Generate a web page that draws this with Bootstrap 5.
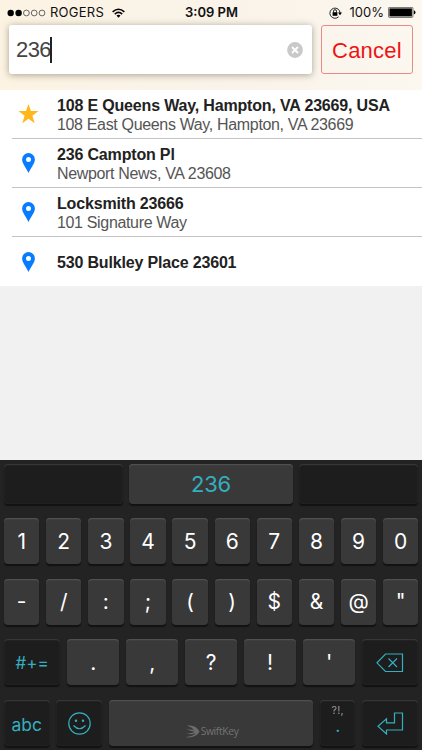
<!DOCTYPE html>
<html lang="en">
<head>
<meta charset="utf-8">
<meta name="viewport" content="width=device-width, initial-scale=1">
<title>Address search</title>
<link href="https://cdn.jsdelivr.net/npm/bootstrap@5.3.0/dist/css/bootstrap.min.css" rel="stylesheet">
<style>
body{font-family:"Liberation Sans",Arial,sans-serif;background:#f1f1f1;color:#222;height:750px;overflow:hidden}
svg{display:block;flex:none}
.top-area{height:89.5px;background:linear-gradient(90deg,#fcf3e3,#f9f3e9 50%,#fcf7ef)}
.status{height:25px;font-family:Inter,sans-serif;font-size:13px;color:#111;display:grid;grid-template-columns:1fr auto 1fr;padding:0 6px 0 7px}
.carrier{letter-spacing:.25px}
.search-row{padding:0 9px}
.search-box{width:303px;height:49px;background:#fff;border-radius:3px;box-shadow:0 1px 7px rgba(90,75,50,.5);padding:0 9px 0 7px}
.query{font-size:22px;letter-spacing:-.6px;color:#444}
.caret{width:2px;height:26px;background:#222;margin-left:-1px}
.cancel-btn{width:92px;height:49px;border:1px solid #e88a85;border-radius:3px;color:#ee1414;font-size:22px;padding:2px 0 0;background:transparent;line-height:1;letter-spacing:.25px}
.place{height:49.2px;padding-left:12px;background:#fff}
.place-icon{width:33px;display:flex;justify-content:center}
.place:not(:last-child) .place-in{border-bottom:1px solid #c4c4c6}
.place-in{height:100%}
.place-name{font-weight:700;font-size:16px;line-height:19px;letter-spacing:-.17px;white-space:nowrap}
.place-sub{font-size:16px;line-height:19px;letter-spacing:-.34px;color:#555;white-space:nowrap}
.place-text{margin-left:12px;padding-top:2px}
.keyboard{height:290px;background:#232323;padding:4px 3.7px 0 4px;font-family:Inter,sans-serif;color:#fff}
.krow{display:grid;height:46px;column-gap:6.8px;margin-bottom:14.6px}
.ksug{height:40px;grid-template-columns:119px 164px 119px;column-gap:6px;margin-bottom:14.2px}
.k10{grid-template-columns:repeat(10,1fr)}
.k7{grid-template-columns:56.3px repeat(5,1fr) 56.3px}
.k5{grid-template-columns:45.6px 45.6px 1fr 35px 56.3px}
.key{border:0;border-radius:4px;background:#393939;color:#fff;font-size:21px;line-height:1;padding:0;display:flex;align-items:center;justify-content:center;box-shadow:inset 0 1.3px 0 #505050,0 1.5px 1px #121212;min-width:0}
.key.dim{background:#1d1d1d;color:#35afc0;box-shadow:inset 0 1.3px 0 #363636,inset 0 0 2px #303030,0 1.5px 1px #121212}
.key.teal{color:#35afc0}
.key.t-sug{font-size:22px;letter-spacing:-.2px}
.key.t-fn{font-size:17.5px;padding-top:3px}
.key.t-sym{font-size:17px;padding-top:3px}
.key.pic{padding-top:2px}
.key.brand{font-family:"Open Sans",sans-serif;font-size:10.3px;letter-spacing:-.35px;color:#747474;padding:17px 0 0 1px;gap:1px}
.hint{font-size:10.5px;letter-spacing:.3px;color:#999;line-height:10px;padding-top:6px}
.dot{font-size:18px;line-height:18px;margin-top:1px}
</style>
<script src="https://cdn.jsdelivr.net/npm/bootstrap@5.3.0/dist/js/bootstrap.bundle.min.js"></script>
</head>
<body class="m-0 d-flex flex-column">
<header class="top-area">
  <div class="status align-items-center">
    <div class="d-flex align-items-center">
      <svg width="39" height="8" viewBox="0 0 39 8"><g fill="#000"><circle cx="3.7" cy="4" r="3.2"/><circle cx="11.6" cy="4" r="3.2"/></g><g fill="none" stroke="#444" stroke-width=".8"><circle cx="19.4" cy="4" r="2.9"/><circle cx="27.2" cy="4" r="2.9"/><circle cx="35" cy="4" r="2.9"/></g></svg>
      <span class="carrier ms-1">ROGERS</span>
      <svg class="ms-2" width="13" height="10" viewBox="0 0 14 10"><g fill="none" stroke="#000" stroke-width="1.7"><path d="M.7 3.8Q7-1.9 13.3 3.8M3 6.2Q7 2.6 11 6.2"/></g><path d="M4.8 7.8Q7 6 9.2 7.8L7 10Z"/></svg>
    </div>
    <div class="fw-semibold">3:09 PM</div>
    <div class="d-flex align-items-center justify-content-end">
      <svg class="me-2" width="13" height="12" viewBox="0 0 13 12"><path d="M9.6 9.8A5.1 5.1 0 1 1 11.1 6" fill="none" stroke="#222"/><path d="M9 5.5h4L11 8.3Z"/><rect x="3.6" y="5.2" width="4.8" height="3.6"/><path d="M4.5 5.4V4.2a1.5 1.5 0 0 1 3 0v1.2" fill="none" stroke="#000" stroke-width=".9"/></svg>
      <span>100%</span>
      <svg class="ms-1" width="28" height="11" viewBox="0 0 28 11"><rect x=".4" y=".4" width="24.5" height="10" rx="1" fill="none" stroke="#333" stroke-width=".7"/><rect x="1.4" y="1.4" width="22.5" height="8"/><path d="M25.8 3.3Q27.5 3.800 27.5 5.400T25.800 7.500Z"/></svg>
    </div>
  </div>
  <div class="search-row d-flex justify-content-between">
    <div class="search-box d-flex align-items-center">
      <span class="query">236</span><span class="caret"></span>
      <svg class="ms-auto" width="16" height="16" viewBox="0 0 16 16"><circle cx="8" cy="8" r="7.9" fill="#c9c9c9"/><path d="M5 5l6 6M11 5l-6 6" stroke="#fff" stroke-width="1.8"/></svg>
    </div>
    <button class="cancel-btn btn">Cancel</button>
  </div>
</header>
<main>
  <div class="place"><div class="place-in d-flex align-items-center">
    <div class="place-icon"><svg width="21" height="20" viewBox="0 0 21 20"><path fill="#ffb71c" d="M10.5 0l2.45 7.1h7.55l-6.1 4.6 2.3 7.5-6.2-4.5-6.2 4.5 2.3-7.5L.5 7.1h7.55Z"/></svg></div>
    <div class="place-text"><div class="place-name">108 E Queens Way, Hampton, VA 23669, USA</div><div class="place-sub">108 East Queens Way, Hampton, VA 23669</div></div>
  </div></div>
  <div class="place"><div class="place-in d-flex align-items-center">
    <div class="place-icon"><svg width="13" height="20" viewBox="0 0 13 20"><path fill="#087cff" fill-rule="evenodd" d="M6.5 0A6.4 6.4 0 0 0 .1 6.5C.1 10.5 4.4 15.5 6.5 20 8.6 15.5 12.9 10.5 12.9 6.5A6.4 6.4 0 0 0 6.5 0ZM6.5 3.9a2.5 2.5 0 1 1 0 5 2.5 2.5 0 0 1 0-5Z"/></svg></div>
    <div class="place-text"><div class="place-name">236 Campton Pl</div><div class="place-sub">Newport News, VA 23608</div></div>
  </div></div>
  <div class="place"><div class="place-in d-flex align-items-center">
    <div class="place-icon"><svg width="13" height="20" viewBox="0 0 13 20"><path fill="#087cff" fill-rule="evenodd" d="M6.5 0A6.4 6.4 0 0 0 .1 6.5C.1 10.5 4.4 15.5 6.5 20 8.6 15.5 12.9 10.5 12.9 6.5A6.4 6.4 0 0 0 6.5 0ZM6.5 3.9a2.5 2.5 0 1 1 0 5 2.5 2.5 0 0 1 0-5Z"/></svg></div>
    <div class="place-text"><div class="place-name">Locksmith 23666</div><div class="place-sub">101 Signature Way</div></div>
  </div></div>
  <div class="place"><div class="place-in d-flex align-items-center">
    <div class="place-icon"><svg width="13" height="20" viewBox="0 0 13 20"><path fill="#087cff" fill-rule="evenodd" d="M6.5 0A6.4 6.4 0 0 0 .1 6.5C.1 10.5 4.4 15.5 6.5 20 8.6 15.5 12.9 10.5 12.9 6.5A6.4 6.4 0 0 0 6.5 0ZM6.5 3.9a2.5 2.5 0 1 1 0 5 2.5 2.5 0 0 1 0-5Z"/></svg></div>
    <div class="place-text"><div class="place-name">530 Bulkley Place 23601</div></div>
  </div></div>
</main>
<section class="keyboard mt-auto">
  <div class="krow ksug"><button class="key dim" aria-label="Left suggestion"></button><button class="key teal t-sug">236</button><button class="key dim" aria-label="Right suggestion"></button></div>
  <div class="krow k10"><button class="key">1</button><button class="key">2</button><button class="key">3</button><button class="key">4</button><button class="key">5</button><button class="key">6</button><button class="key">7</button><button class="key">8</button><button class="key">9</button><button class="key">0</button></div>
  <div class="krow k10"><button class="key">-</button><button class="key">/</button><button class="key">:</button><button class="key">;</button><button class="key">(</button><button class="key">)</button><button class="key">$</button><button class="key">&amp;</button><button class="key">@</button><button class="key">"</button></div>
  <div class="krow k7"><button class="key dim t-sym">#+=</button><button class="key">.</button><button class="key">,</button><button class="key">?</button><button class="key">!</button><button class="key">'</button>
    <button class="key dim pic" aria-label="Delete"><svg width="28" height="20" viewBox="0 0 28 20" fill="none" stroke="#35afc0" stroke-width="1.2"><path d="M9.5 1H26.5V18.5H9.5L1 9.8Z"/><path d="M12.5 5.5l8.5 8.5M21 5.5l-8.5 8.5"/></svg></button></div>
  <div class="krow k5 mb-0"><button class="key dim t-fn">abc</button>
    <button class="key dim pic" aria-label="Emoji"><svg width="23" height="23" viewBox="0 0 23 23" fill="none" stroke="#35afc0" stroke-width="1.2"><circle cx="11.5" cy="11.5" r="10.7"/><path d="M5.5 13.5Q11.5 20 17.5 13.5" /><g fill="#35afc0" stroke="none"><circle cx="8" cy="8.7" r="1.2"/><circle cx="15" cy="8.7" r="1.2"/></g></svg></button>
    <button class="key brand"><svg width="15" height="13" viewBox="0 0 15 13" fill="#6c6c6c"><path d="M2 .8C8-.2 12 2 14.5 6.500 12.500 11 6 13.500 .5 12 6 11.800 9.500 10 10.500 8 7.500 9.500 4 9.500 1.500 8.800 5 8.700 8 7.800 9.500 6.500 7 6.500 3.500 5.500 1 3.500 4 4.800 7 5 9 4.800 7 3 5 1.500 2 .8Z"/></svg>SwiftKey</button>
    <button class="key dim flex-column justify-content-start"><span class="hint">?!,</span><span class="dot">.</span></button>
    <button class="key dim pic" aria-label="Return"><svg width="27" height="23" viewBox="0 0 27 23" fill="none" stroke="#35afc0" stroke-width="1.2"><path d="M17.5 1H25.5V18H9.5V22L1 14.3 9.5 6.8V10.8H17.5Z"/></svg></button></div>
</section>
</body>
</html>
